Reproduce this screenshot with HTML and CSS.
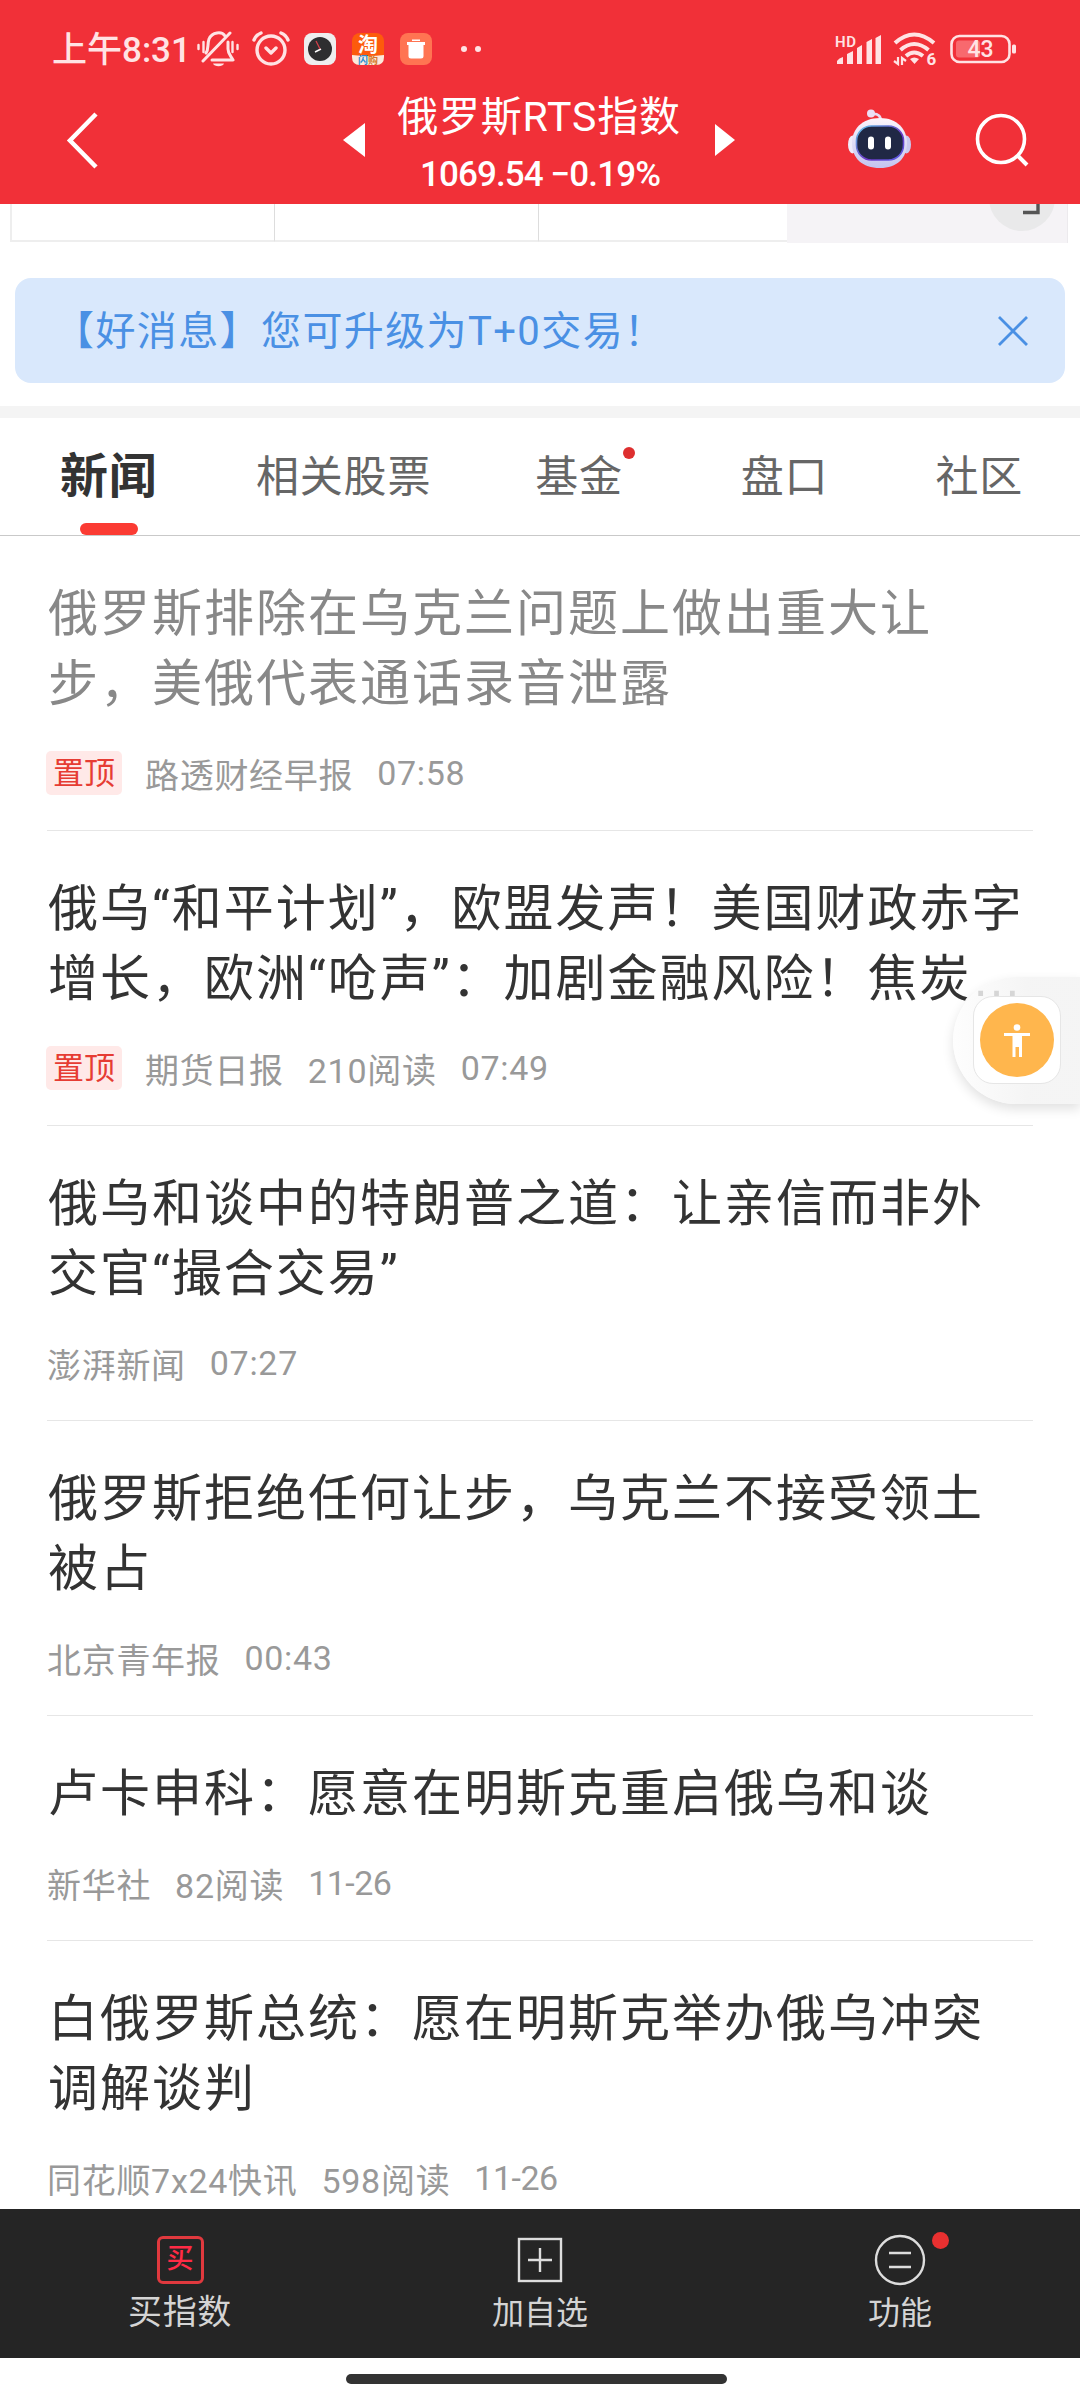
FILE: index.html
```
<!DOCTYPE html>
<html lang="zh-CN">

<head>
    <meta charset="UTF-8">
    <meta name="viewport" content="width=device-width, initial-scale=1.0">
    <title>俄罗斯RTS指数</title>
    <link rel="stylesheet" href="styles.css">
</head>

<body>
    <div class="page">
        <!-- 顶部 -->
        <div class="header">
            <div class="status">
                <span class="time">上午8:31</span>
                <svg class="i-mute" width="42" height="36" viewBox="0 0 42 36" fill="none" stroke="#ffe3e4" stroke-width="3" stroke-linecap="round">
                    <path d="M33 2L6 30M9 22C12 18 10 14 12 8C15 1 25 0 28 5M31 11V18C31 23 34 25 36 29H15" stroke-linejoin="round" />
                    <path d="M1.500 14V18M6.500 11V21M35.500 11V21M40.500 14V18" stroke-width="2.400" />
                    <path d="M16 32.500H27C26 36 17 36 16 32.500Z" fill="#ffe3e4" stroke="none" />
                </svg>
                <svg class="i-alarm" width="40" height="36" viewBox="0 0 40 36" fill="none" stroke="#ffe3e4" stroke-width="3.400" stroke-linecap="round">
                    <circle cx="20" cy="19" r="14" />
                    <path d="M3 9Q5 4 10 2M37 9Q35 4 30 2M15 17L20 22L25 17" stroke-linejoin="round" />
                </svg>
                <svg class="i-app" width="32" height="32" viewBox="0 0 32 32">
                    <rect width="32" height="32" rx="8" fill="#eeeeef" />
                    <circle cx="16" cy="16" r="12" fill="#2e2e30" />
                    <path d="M17 16L11 19" stroke="#fff" stroke-width="1.500" />
                    <path d="M16 16L12 8" stroke="#d8414a" stroke-width="1.200" />
                </svg>
                <svg class="i-app" width="32" height="32" viewBox="0 0 32 32">
                    <rect width="32" height="32" rx="8" fill="#fd5b0c" />
                    <path d="M0 22Q16 24 32 22V24Q32 32 24 32H8Q0 32 0 24Z" fill="#fde9dc" />
                    <text class="tao" x="16" y="19" text-anchor="middle">淘</text>
                    <text class="tao-sub" x="16" y="31" text-anchor="middle"><tspan fill="#2a8ed0">闪</tspan><tspan fill="#d5792c">购</tspan></text>
                </svg>
                <svg class="i-app" width="32" height="32" viewBox="0 0 32 32">
                    <rect width="32" height="32" rx="8" fill="#ff7452" />
                    <path d="M7 9H12V6.500H20V9H25V12H23.500V23Q23.500 25.500 21 25.500H11Q8.500 25.500 8.500 23V12H7Z" fill="#fff" />
                    <path d="M12 8.500H20" stroke="#ff7452" stroke-width="1" />
                </svg>
                <svg class="i-dots" width="22" height="8" viewBox="0 0 22 8" fill="#ffe3e4">
                    <circle cx="4" cy="4" r="3" />
                    <circle cx="18" cy="4" r="3" />
                </svg>
                <svg class="i-signal" width="46" height="32" viewBox="0 0 46 32" fill="#ffe3e4">
                    <text class="hd" x="0" y="14" textLength="21">HD</text>
                    <path d="M2 31V28Q4 25 8 24V31ZM12 31V21L18 18V31ZM22 31V15L27 12V31ZM31.500 31V9L37 6V31ZM40.500 31V5L46 2V31Z" />
                </svg>
                <svg class="i-wifi" width="44" height="34" viewBox="0 0 44 34" fill="none" stroke="#ffe3e4" stroke-width="4">
                    <path d="M2 11Q21 -6 41 11M7.500 18Q21 6 35.500 18M13 24Q21 17 30 24" />
                    <path d="M17 27Q21 24 26 27L21.500 32Z" fill="#ffe3e4" stroke="none" />
                    <path d="M5 25V32L1 29M9 33V26L13 29" stroke-width="2.200" />
                    <text class="wifi-num" x="33.500" y="33">6</text>
                </svg>
                <svg class="i-battery" width="67" height="30" viewBox="0 0 67 30">
                    <rect x="1.500" y="2" width="58" height="26" rx="8" fill="none" stroke="#ffe3e4" stroke-width="2.600" />
                    <rect x="6" y="6.500" width="24" height="17" rx="3" fill="#f8696e" />
                    <rect x="62" y="10.500" width="4" height="9" rx="1.500" fill="#ffe3e4" />
                    <text class="battery-num" x="30.500" y="23" text-anchor="middle">43</text>
                </svg>
            </div>
            <div class="navbar">
                <svg class="back" width="34" height="60" viewBox="0 0 34 60" fill="none" stroke="#fff" stroke-width="4.500">
                    <path d="M31 4L5 30.500L31 57" />
                </svg>
                <svg class="prev" width="24" height="36" viewBox="0 0 24 36">
                    <path d="M23 1V35L1 18Z" fill="#fff" />
                </svg>
                <div class="title">
                    <h1>俄罗斯RTS指数</h1>
                    <p>1069.54 −0.19%</p>
                </div>
                <svg class="next" width="22" height="34" viewBox="0 0 22 34">
                    <path d="M1 1V33L21 17Z" fill="#fff" />
                </svg>
                <svg class="robot" width="64" height="62" viewBox="0 0 64 62">
                    <defs>
                        <linearGradient id="shell" x1="0" y1="0" x2="0" y2="1">
                            <stop offset="0" stop-color="#fdf5fc" />
                            <stop offset="1" stop-color="#c3c4ef" />
                        </linearGradient>
                        <linearGradient id="rim" x1="0" y1="0" x2="1" y2="1">
                            <stop offset="0" stop-color="#62c7e8" />
                            <stop offset="0.600" stop-color="#6b35c4" />
                            <stop offset="1" stop-color="#5a64e8" />
                        </linearGradient>
                    </defs>
                    <path d="M24 5Q33 4 33 13" fill="none" stroke="#e9dcf3" stroke-width="2.600" />
                    <circle cx="23" cy="4.500" r="4" fill="#ecdff5" />
                    <ellipse cx="4.500" cy="35.500" rx="4.500" ry="9" fill="#f0ecfa" />
                    <ellipse cx="58.500" cy="35.500" rx="4.500" ry="9" fill="#c9c9ef" />
                    <path d="M32 9C49 9 59 20 59 34C59 49 49 59 32 59C14 59 4 49 4 34C4 20 14 9 32 9Z" fill="url(#shell)" />
                    <rect x="8.500" y="17" width="47" height="34" rx="15" fill="#202845" stroke="url(#rim)" stroke-width="1.600" />
                    <rect x="20" y="27.500" width="6" height="13" rx="3" fill="#fff" />
                    <rect x="37" y="27.500" width="6" height="13" rx="3" fill="#fff" />
                </svg>
                <svg class="search" width="54" height="54" viewBox="0 0 54 54" fill="none" stroke="#fff" stroke-width="3.600">
                    <circle cx="26" cy="26" r="23.500" />
                    <path d="M42 42L52 52" stroke-width="4" />
                </svg>
            </div>
        </div>

        <!-- 表格底部 -->
        <div class="cells">
            <div class="cell"></div>
            <div class="cell"></div>
            <div class="cell"></div>
            <div class="cell-more">
                <svg width="70" height="27" viewBox="0 0 70 27">
                    <circle cx="35" cy="-6" r="33" fill="#e9e9ea" />
                    <path d="M36 8.500H51V0" fill="none" stroke="#555" stroke-width="3.400" />
                </svg>
            </div>
        </div>

        <div class="notice">
            <span>【好消息】您可升级为T+0交易！</span>
            <svg width="30" height="30" viewBox="0 0 30 30" stroke="#4a90e4" stroke-width="2.800">
                <path d="M1 1L29 29M29 1L1 29" />
            </svg>
        </div>

        <!-- 选项卡 -->
        <ul class="tabs">
            <li class="active">新闻</li>
            <li class="stock">相关股票</li>
            <li class="fund">基金</li>
            <li class="quote">盘口</li>
            <li class="club">社区</li>
        </ul>

        <!-- 新闻列表 -->
        <ul class="news">
            <li class="read">
                <h2>俄罗斯排除在乌克兰问题上做出重大让<br>步，美俄代表通话录音泄露</h2>
                <div class="meta"><b>置顶</b><span>路透财经早报</span><span>07:58</span></div>
            </li>
            <li>
                <h2>俄乌“和平计划”，欧盟发声！美国财政赤字<br>增长，欧洲“呛声”：加剧金融风险！焦炭<i>…</i></h2>
                <div class="meta"><b>置顶</b><span>期货日报</span><span>210阅读</span><span>07:49</span></div>
            </li>
            <li>
                <h2>俄乌和谈中的特朗普之道：让亲信而非外<br>交官“撮合交易”</h2>
                <div class="meta"><span>澎湃新闻</span><span>07:27</span></div>
            </li>
            <li>
                <h2>俄罗斯拒绝任何让步，乌克兰不接受领土<br>被占</h2>
                <div class="meta"><span>北京青年报</span><span>00:43</span></div>
            </li>
            <li>
                <h2>卢卡申科：愿意在明斯克重启俄乌和谈</h2>
                <div class="meta"><span>新华社</span><span>82阅读</span><span class="date">11-26</span></div>
            </li>
            <li>
                <h2>白俄罗斯总统：愿在明斯克举办俄乌冲突<br>调解谈判</h2>
                <div class="meta"><span>同花顺7x24快讯</span><span>598阅读</span><span class="date">11-26</span></div>
            </li>
        </ul>

        <!-- 底部导航 -->
        <div class="footer">
            <div class="item buy">
                <div class="icon"><em>买</em></div>
                <p>买指数</p>
            </div>
            <div class="item">
                <div class="icon">
                    <svg width="46" height="46" viewBox="0 0 46 46" fill="none" stroke="#ddd" stroke-width="2.400">
                        <rect x="2" y="2" width="42" height="42" />
                        <path d="M11 23H35M23 11V35" />
                    </svg>
                </div>
                <p>加自选</p>
            </div>
            <div class="item">
                <div class="icon new">
                    <svg width="52" height="52" viewBox="0 0 52 52" fill="none" stroke="#ddd" stroke-width="2.400">
                        <circle cx="26" cy="26" r="24" />
                        <path d="M15 19H37M15 33H37" />
                    </svg>
                </div>
                <p>功能</p>
            </div>
        </div>
        <div class="home"><span></span></div>

        <!-- 悬浮按钮 -->
        <div class="float">
            <div class="float-box">
                <svg width="74" height="74" viewBox="0 0 74 74">
                    <circle cx="37" cy="37" r="37" fill="#ffb64d" />
                    <circle cx="37" cy="24.500" r="3.300" fill="#fff" />
                    <path d="M24 30H50V33H42V54H39V44H35.500V54H32.500V33H24Z" fill="#fff" />
                </svg>
            </div>
        </div>
    </div>
</body>

</html>
```
FILE: styles.css
```
html,
body,
ul,
li,
h1,
h2,
p {
    margin: 0;
    padding: 0;
    font-weight: 400;
}

body {
    font-family: Roboto, "Noto Sans CJK SC", sans-serif;
    background-color: #fff;
    color: #333;
    text-spacing-trim: space-all;
}

ul {
    list-style: none;
}

svg {
    display: block;
    flex: none;
}

em,
i {
    font-style: normal;
}

.page {
    width: 1080px;
    height: 2400px;
    position: relative;
    overflow: hidden;
    display: flex;
    flex-direction: column;
    white-space: nowrap;
}

/* 顶部 */
.header {
    height: 204px;
    flex: none;
    background-color: #f13038;
    color: #fff;
}

.status {
    height: 98px;
    box-sizing: border-box;
    padding: 0 63px 0 52px;
    display: flex;
    align-items: center;
    color: #ffe3e4;
}

.time {
    width: 145px;
    font-size: 35px;
    line-height: 98px;
    font-weight: 500;
    padding-top: 4px;
}

.i-alarm {
    margin-left: 12px;
    margin-right: -3px;
}

.i-app {
    margin-left: 16px;
}

.i-dots {
    margin-left: 28px;
}

.i-signal {
    margin-left: auto;
}

.i-wifi {
    margin-left: 12px;
}

.i-battery {
    margin-left: 13px;
}

.tao {
    font-size: 20px;
    font-weight: 700;
    fill: #fff;
}

.tao-sub {
    font-size: 10px;
    font-weight: 700;
}

.hd {
    font-size: 15px;
    font-weight: 600;
}

.wifi-num {
    font-size: 17px;
    font-weight: 700;
    fill: #ffe3e4;
    stroke: none;
}

.battery-num {
    font-size: 23px;
    font-weight: 500;
    fill: #ffe3e4;
}

.navbar {
    height: 84px;
    padding: 0 51px 0 65px;
    display: flex;
    align-items: center;
}

.prev {
    margin-left: 243px;
}

.title {
    width: 348px;
    display: flex;
    flex-direction: column;
    align-items: center;
    padding-top: 11px;
}

.title h1 {
    font-size: 41px;
    line-height: 56px;
    letter-spacing: 0.8px;
    margin-left: -2px;
}

.title p {
    font-size: 35px;
    line-height: 54px;
    font-weight: 500;
    letter-spacing: -0.9px;
    margin-top: 3px;
}

.robot {
    margin-left: auto;
}

.search {
    margin-left: 63px;
}

/* 表格底部 */
.cells {
    height: 39px;
    margin-left: 10px;
    flex: none;
    display: flex;
    align-items: flex-start;
}

.cell {
    box-sizing: border-box;
    width: 264px;
    height: 38px;
    border-left: 1px solid #ddd;
    border-bottom: 2px solid #eee;
}

.cell:first-child {
    border-left: 2px solid #eee;
}

.cell:nth-child(3) {
    width: 249px;
}

.cell-more {
    width: 280px;
    height: 39px;
    background-color: #f5f3f6;
    border-right: 1px solid #eceaed;
}

.cell-more svg {
    margin-left: 200px;
}

/* 提示条 */
.notice {
    height: 105px;
    margin: 35px 15px 23px;
    padding: 0 37px 0 39px;
    flex: none;
    box-sizing: border-box;
    border-radius: 16px;
    background-color: #d9e8fc;
    color: #4a90e4;
    display: flex;
    align-items: center;
    justify-content: space-between;
    font-size: 40px;
    letter-spacing: 1.4px;
}

.notice span {
    padding-bottom: 5px;
}

/* 选项卡 */
.tabs {
    height: 117px;
    flex: none;
    border-top: 12px solid #f4f4f4;
    border-bottom: 1px solid #c9c9c9;
    padding-left: 60px;
    display: flex;
    font-size: 43px;
    line-height: 118px;
    letter-spacing: 0.8px;
    color: #666;
}

.tabs li {
    position: relative;
}

.tabs .active {
    width: 97px;
    font-size: 48px;
    font-weight: 700;
    color: #333;
}

.tabs .active::after {
    content: "";
    position: absolute;
    left: 20px;
    top: 105px;
    width: 58px;
    height: 12px;
    border-radius: 6px;
    background-color: #fb3b33;
}

.tabs .stock {
    margin-left: 99px;
}

.tabs .fund {
    margin-left: 104px;
}

.tabs .quote {
    margin-left: 118px;
}

.tabs .club {
    margin-left: 107px;
}

.tabs .fund::after {
    content: "";
    position: absolute;
    right: -12px;
    top: 29px;
    width: 12px;
    height: 12px;
    border-radius: 50%;
    background-color: #de2f2f;
}

/* 新闻列表 */
.news {
    height: 1673px;
    flex: none;
    overflow: hidden;
    padding: 0 47px;
}

.news li {
    padding-top: 43px;
    border-bottom: 1px solid #e6e6e6;
}

.news h2 {
    font-size: 50px;
    line-height: 70px;
    letter-spacing: 2px;
    padding-left: 1px;
}

.news h2 i {
    font-family: "Liberation Sans", sans-serif;
    line-height: 1;
    letter-spacing: 0;
}

.news .read h2 {
    color: #888;
}

.meta {
    height: 46px;
    padding: 31px 0 34px;
    display: flex;
    align-items: center;
    font-size: 34px;
    color: #999;
}

.meta span {
    letter-spacing: 0.7px;
    margin-right: 24px;
}

.meta .date {
    letter-spacing: -0.5px;
}

.meta b {
    width: 76px;
    height: 44px;
    line-height: 45px;
    margin-left: -1px;
    margin-right: 23px;
    border-radius: 5px;
    background-color: #ffe9e8;
    color: #e63c33;
    font-size: 31px;
    font-weight: 400;
    text-align: center;
}

/* 底部导航 */
.footer {
    height: 149px;
    flex: none;
    background-color: #252525;
    color: #d4d4d4;
    display: flex;
}

.item {
    flex: 1;
    display: flex;
    flex-direction: column;
    align-items: center;
    font-size: 32px;
}

.icon {
    height: 52px;
    margin-top: 25px;
    position: relative;
    display: flex;
    align-items: center;
}

.item p {
    line-height: 46px;
    margin-top: 4px;
}

.buy p {
    font-size: 34px;
    letter-spacing: 0.7px;
    margin-top: 3px;
}

.icon em {
    width: 41px;
    height: 42px;
    line-height: 41px;
    border: 3px solid #e0393e;
    border-radius: 6px;
    color: #ff2b45;
    font-size: 27px;
    font-weight: 500;
    text-align: center;
}

.new::after {
    content: "";
    position: absolute;
    left: 58px;
    top: -2px;
    width: 17px;
    height: 17px;
    border-radius: 50%;
    background-color: #e93030;
}

.home {
    flex: 1;
    display: flex;
    justify-content: center;
    align-items: flex-start;
}

.home span {
    width: 381px;
    height: 10px;
    margin-top: 16px;
    margin-right: 7px;
    border-radius: 5px;
    background-color: #333;
}

/* 悬浮按钮 */
.float {
    position: absolute;
    top: 977px;
    right: 0;
    width: 127px;
    height: 127px;
    box-sizing: border-box;
    padding: 19px 0 0 20px;
    border-radius: 64px 0 0 64px;
    background: linear-gradient(to right, rgba(253, 253, 253, 0.8), rgba(243, 243, 243, 0.85) 60%);
    box-shadow: 0 5px 12px rgba(0, 0, 0, 0.12);
}

.float-box {
    width: 86px;
    height: 86px;
    border: 1px solid #e6e6e6;
    border-radius: 20px;
    background-color: #fff;
    display: flex;
    align-items: center;
    justify-content: center;
}
```
